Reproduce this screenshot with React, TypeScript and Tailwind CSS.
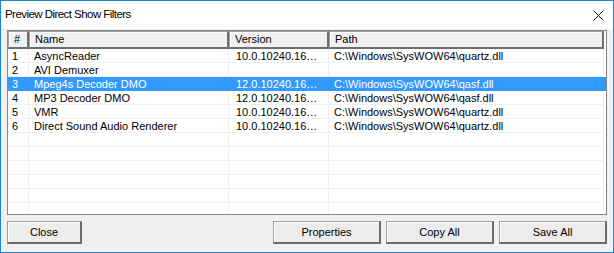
import React from 'react';

type Filter = { id: number; name: string; version: string; path: string };

const filters: Filter[] = [
  { id: 1, name: 'AsyncReader', version: '10.0.10240.16…', path: 'C:\\Windows\\SysWOW64\\quartz.dll' },
  { id: 2, name: 'AVI Demuxer', version: '', path: '' },
  { id: 3, name: 'Mpeg4s Decoder DMO', version: '12.0.10240.16…', path: 'C:\\Windows\\SysWOW64\\qasf.dll' },
  { id: 4, name: 'MP3 Decoder DMO', version: '12.0.10240.16…', path: 'C:\\Windows\\SysWOW64\\qasf.dll' },
  { id: 5, name: 'VMR', version: '10.0.10240.16…', path: 'C:\\Windows\\SysWOW64\\quartz.dll' },
  { id: 6, name: 'Direct Sound Audio Renderer', version: '10.0.10240.16…', path: 'C:\\Windows\\SysWOW64\\quartz.dll' },
];

const SELECTED = 3;

function HeaderCell({ label, className }: { label: string; className: string }) {
  return (
    <div
      className={`${className} h-[18px] flex items-center pl-[5px] bg-[#f0f0f0] border-t border-l border-[#a0a0a0] border-r-2 border-b-2 border-r-[#6d6d6d] border-b-[#6d6d6d] shadow-[inset_1px_1px_0_#ffffff]`}
    >
      {label}
    </div>
  );
}

function WinButton({ label, className }: { label: string; className: string }) {
  return (
    <button
      className={`${className} h-[23px] bg-[#ececec] text-black border-t border-l border-[#a0a0a0] border-r-2 border-b-2 border-r-[#6d6d6d] border-b-[#6d6d6d] shadow-[inset_1px_1px_0_#ffffff] flex items-center justify-center`}
    >
      {label}
    </button>
  );
}

export default function App() {
  // pad with empty rows so the grid lines fill the list
  const rows: (Filter | null)[] = [...filters, ...Array(6).fill(null)];

  return (
    <div
      className="w-[614px] h-[253px] flex flex-col border border-[#1883d7] bg-white text-[11px] text-black overflow-hidden"
      style={{ fontFamily: '"Liberation Sans", Arial, sans-serif' }}
    >
      {/* Title bar */}
      <div className="h-[28px] shrink-0 flex items-center justify-between bg-white pl-[4px] pr-[9px]">
        <span className="text-[11.5px] tracking-[-0.55px] text-black">Preview Direct Show Filters</span>
        <svg width="11" height="11" viewBox="0 0 11 11" className="mt-[1px]">
          <path d="M0.5 0.5 L10.5 10.5 M10.5 0.5 L0.5 10.5" stroke="#111" strokeWidth="1" fill="none" />
        </svg>
      </div>

      <div className="flex-1 flex flex-col bg-[#f0f0f0] pt-[1px] px-[6px] pb-[8px]">
        {/* List view */}
        <div className="h-[185px] shrink-0 border border-[#828790] bg-white overflow-hidden">
          <div className="flex">
            <HeaderCell label="#" className="w-[21px]" />
            <HeaderCell label="Name" className="w-[200px]" />
            <HeaderCell label="Version" className="w-[100px]" />
            <HeaderCell label="Path" className="w-[275px]" />
          </div>
          {rows.map((row, i) => {
            const selected = row?.id === SELECTED;
            const line = selected ? 'border-[#3399ff]' : 'border-[#f0f0f0]';
            return (
              <div
                key={i}
                className={`flex h-[14px] leading-[14px] ${selected ? 'bg-[#3399ff] text-white' : ''}`}
              >
                <div className={`w-[21px] pl-[4px] border-b border-r ${line}`}>
                  {row?.id}
                </div>
                <div className={`w-[200px] pl-[5px] border-b border-r ${line} whitespace-nowrap overflow-hidden`}>
                  {row?.name}
                </div>
                <div className={`w-[100px] pl-[7px] border-b border-r ${line} whitespace-nowrap overflow-hidden`}>
                  {row?.version}
                </div>
                <div className={`w-[275px] pl-[5px] border-b border-r ${line} whitespace-nowrap overflow-hidden`}>
                  {row?.path}
                </div>
              </div>
            );
          })}
        </div>

        {/* Buttons */}
        <div className="mt-[6px] flex justify-between">
          <WinButton label="Close" className="w-[75px]" />
          <div className="flex gap-[5px]">
            <WinButton label="Properties" className="w-[108px]" />
            <WinButton label="Copy All" className="w-[108px]" />
            <WinButton label="Save All" className="w-[108px]" />
          </div>
        </div>
      </div>
    </div>
  );
}
